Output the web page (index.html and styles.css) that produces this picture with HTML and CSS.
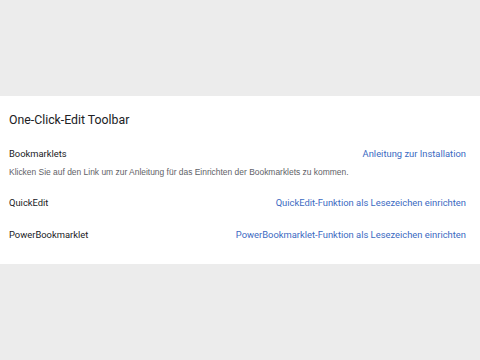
FILE: index.html
```html
<!DOCTYPE html>
<html>
<head>
<meta charset="utf-8">
<link rel="stylesheet" href="styles.css">
</head>
<body>
<div class="spacer"></div>
<section class="card">
  <h1 class="title">One-Click-Edit Toolbar</h1>
  <div class="row row-b">
    <span class="label">Bookmarklets</span>
    <a class="link" href="#">Anleitung zur Installation</a>
  </div>
  <p class="desc">Klicken Sie auf den Link um zur Anleitung für das Einrichten der Bookmarklets zu kommen.</p>
  <div class="row row-q">
    <span class="label">QuickEdit</span>
    <a class="link" href="#">QuickEdit-Funktion als Lesezeichen einrichten</a>
  </div>
  <div class="row row-p">
    <span class="label">PowerBookmarklet</span>
    <a class="link" href="#">PowerBookmarklet-Funktion als Lesezeichen einrichten</a>
  </div>
</section>
</body>
</html>
```
FILE: styles.css
```css
html, body {
  margin: 0;
  padding: 0;
  background: #ececec;
  font-family: Roboto, "Liberation Sans", sans-serif;
}
.spacer {
  height: 96px;
}
.card {
  background: #ffffff;
  height: 168px;
  box-sizing: border-box;
  padding: 16px 14px 0 9px;
}
.title {
  margin: 0;
  font-size: 12.3px;
  font-weight: 400;
  color: #202124;
  line-height: 16px;
}
.row {
  display: flex;
  justify-content: space-between;
  align-items: center;
  height: 16px;
  font-size: 9.4px;
  line-height: 16px;
}
.row-b {
  margin-top: 18px;
}
.label {
  color: #202124;
}
.link {
  color: #3b6ac2;
  text-decoration: none;
}
.desc {
  margin: 4px 0 0;
  font-family: "Liberation Sans", Arial, sans-serif;
  font-size: 8.45px;
  line-height: 12px;
  color: #5f6368;
}
.row-q {
  margin-top: 17px;
}
.row-p {
  margin-top: 16px;
}
```
